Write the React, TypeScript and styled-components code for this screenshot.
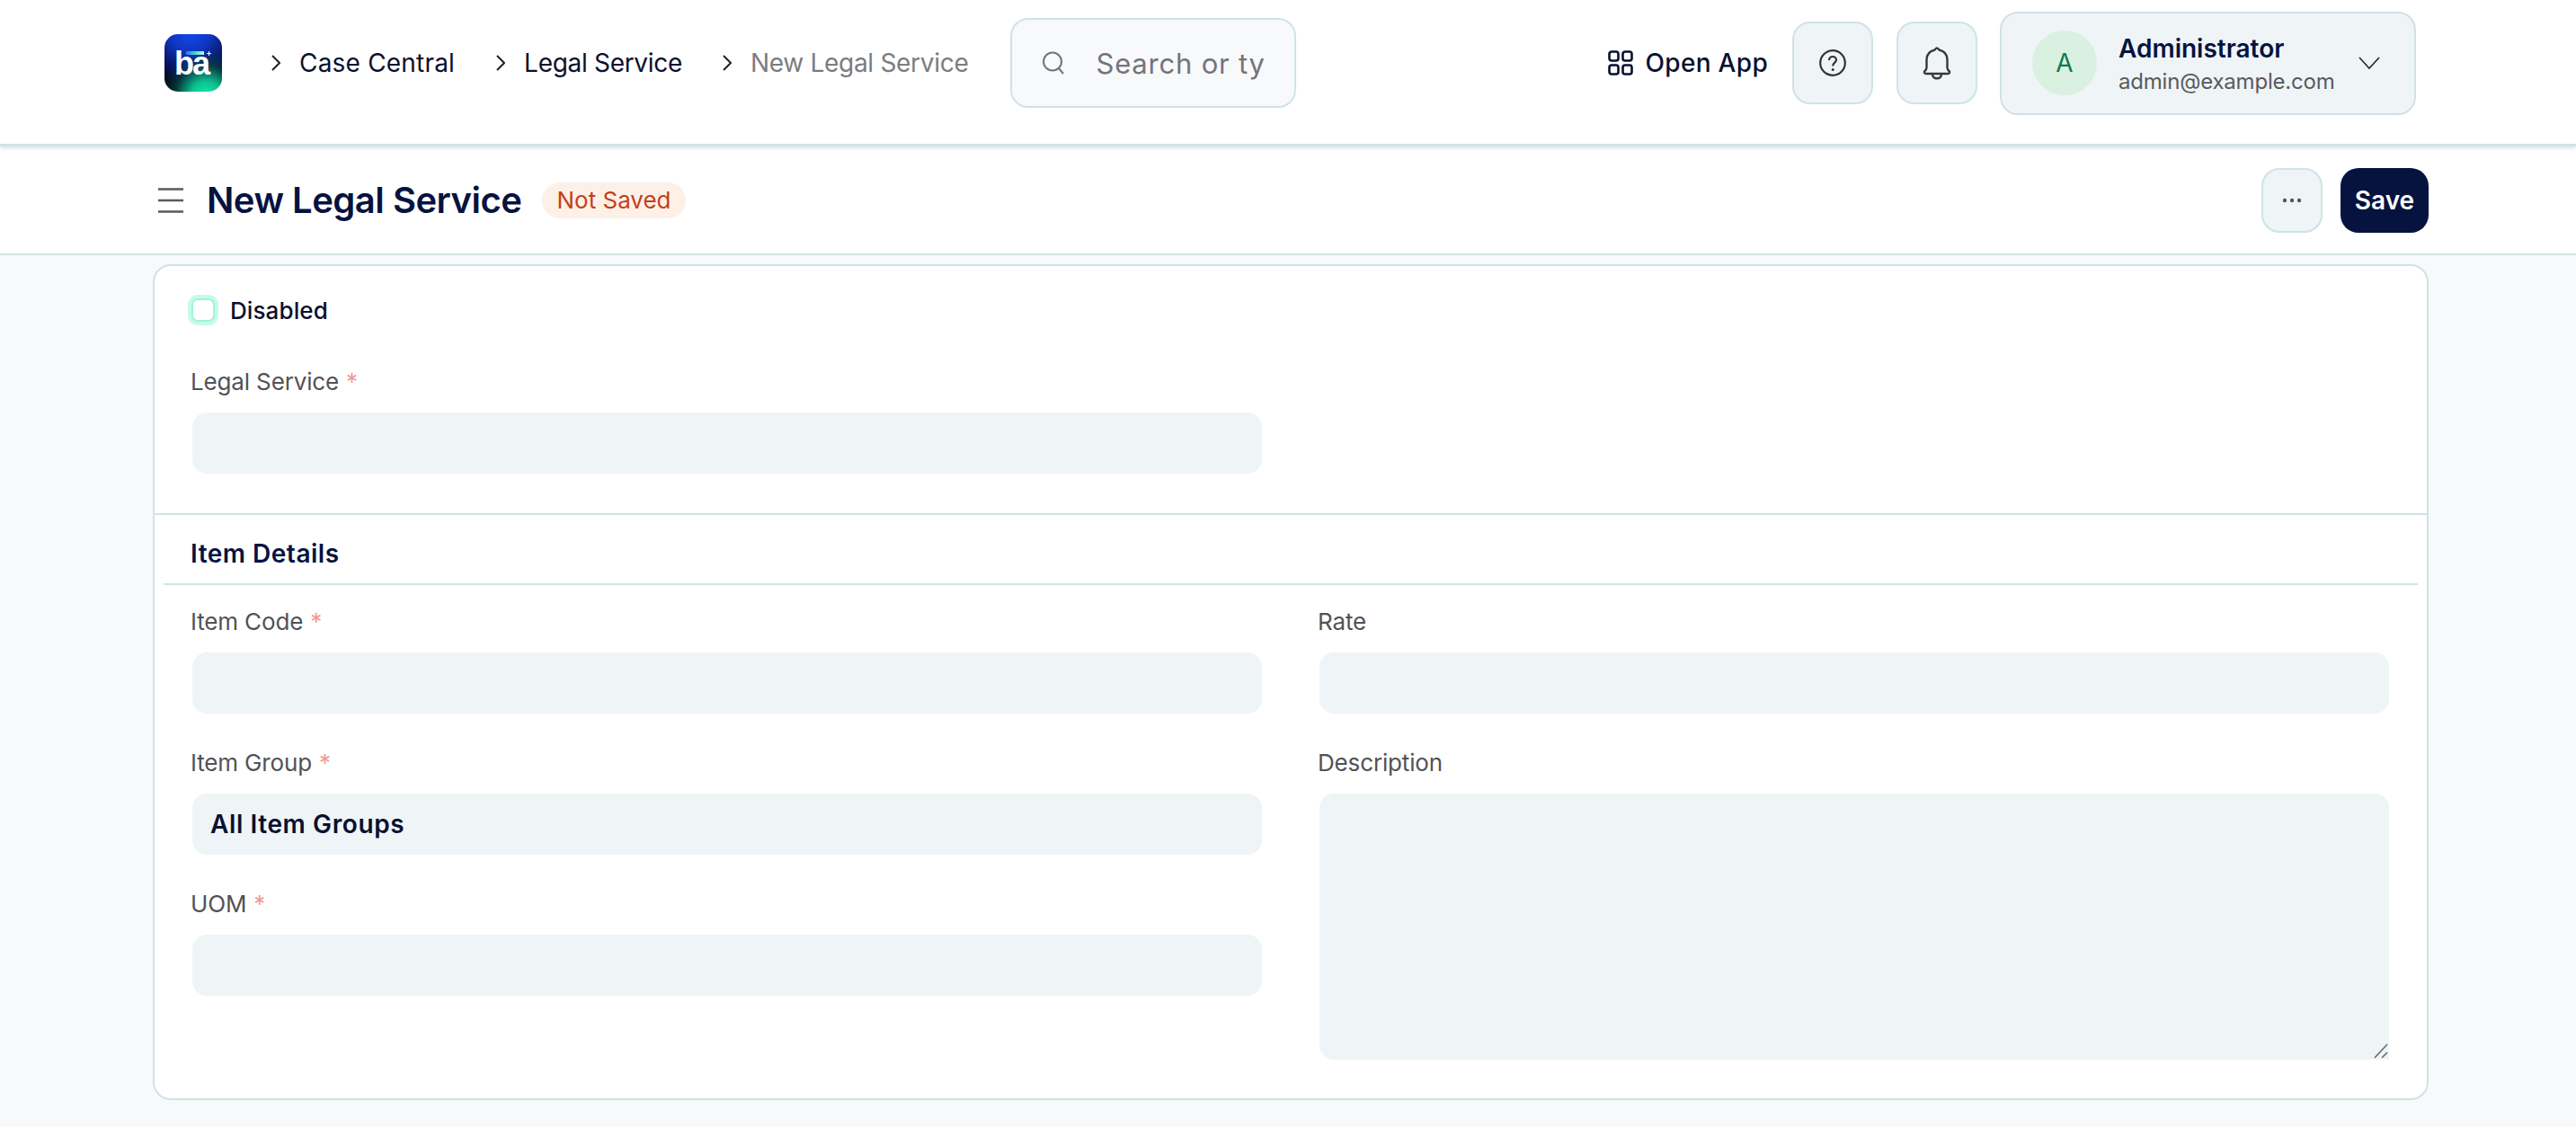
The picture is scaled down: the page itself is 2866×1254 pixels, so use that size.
import React from "react";
import styled, { createGlobalStyle } from "styled-components";

const GlobalStyle = createGlobalStyle`
  html, body {
    margin: 0;
    padding: 0;
    background: #f8f9fb;
    font-family: Inter, "Noto Sans", sans-serif;
    color: #0a1030;
  }
  * { box-sizing: border-box; }
`;

const line = "#cfe3e6";
const navy = "#06133f";
const fill = "#eff4f7";

const Page = styled.div`
  min-height: 1254px;
  background: #f8f9fb;
`;

const Navbar = styled.header`
  height: 163px;
  padding: 0 178px 20px 183px;
  display: flex;
  align-items: center;
  background: #fff;
  border-bottom: 3px solid ${line};
  box-shadow: 0 2px 4px rgba(0, 0, 0, 0.12);
  position: relative;
`;

const Logo = styled.div`
  width: 64px;
  height: 64px;
  flex: none;
  border-radius: 15px;
  position: relative;
  overflow: hidden;
  background:
    radial-gradient(circle at 72% 108%, #14f0ac 0%, #0cc090 20%, rgba(6, 80, 70, 0.6) 42%, transparent 62%),
    radial-gradient(circle at 45% -5%, #1448f0 0%, #0f36c0 30%, rgba(10, 25, 120, 0.75) 58%, transparent 80%),
    #020414;
`;

const LogoMark = styled.span`
  position: absolute;
  left: 11px;
  top: 15px;
  font-family: "Liberation Sans", sans-serif;
  font-weight: 700;
  font-size: 36px;
  line-height: 36px;
  letter-spacing: -2px;
  color: #fff;
`;

const LogoBar = styled.i`
  position: absolute;
  left: 24px;
  top: 19px;
  width: 20px;
  height: 4px;
  background: linear-gradient(90deg, #2f6cf0, #3ee8c0 55%, #cfeee8);
`;

const LogoPlus = styled.i`
  position: absolute;
  left: 47px;
  top: 19px;
  width: 5px;
  height: 5px;
  background:
    linear-gradient(#fff, #fff) center / 5px 1px no-repeat,
    linear-gradient(#fff, #fff) center / 1px 5px no-repeat;
`;

const Crumbs = styled.nav`
  display: flex;
  align-items: center;
  margin-left: 55px;
`;

const Crumb = styled.a<{ $muted?: boolean }>`
  display: flex;
  align-items: center;
  gap: 21px;
  margin-right: 45px;
  font-size: 28px;
  line-height: 36px;
  letter-spacing: -0.3px;
  color: ${(p) => (p.$muted ? "#7c7c80" : "#0a1030")};
  &:first-child {
    margin-right: 46px;
    letter-spacing: 0.2px;
  }
  &:last-child { margin-right: 0; }
`;

const SearchBox = styled.label`
  margin-left: 47px;
  width: 318px;
  height: 100px;
  flex: none;
  display: flex;
  align-items: center;
  padding-left: 33px;
  background: #f8f9fb;
  border: 2px solid ${line};
  border-radius: 20px;
`;

const SearchInput = styled.input`
  width: 188px;
  margin-left: 34px;
  padding: 0;
  border: 0;
  outline: 0;
  background: transparent;
  font-family: inherit;
  font-size: 31px;
  letter-spacing: 0.8px;
  color: #74747c;
  &::placeholder { color: #74747c; opacity: 1; }
`;

const NavRight = styled.div`
  margin-left: auto;
  display: flex;
  align-items: center;
`;

const OpenApp = styled.a`
  display: flex;
  align-items: center;
  gap: 14px;
  margin-right: 27px;
  font-size: 28px;
  font-weight: 500;
  letter-spacing: 0.3px;
  color: #0a1030;
`;

const IconButton = styled.button`
  width: 90px;
  height: 92px;
  margin-right: 26px;
  padding: 0;
  display: flex;
  align-items: center;
  justify-content: center;
  background: ${fill};
  border: 2px solid ${line};
  border-radius: 20px;
  &:last-of-type { margin-right: 25px; }
`;

const Profile = styled.div`
  width: 463px;
  height: 115px;
  padding: 0 38px 0 34px;
  display: flex;
  align-items: center;
  background: ${fill};
  border: 2px solid ${line};
  border-radius: 20px;
`;

const Avatar = styled.div`
  width: 72px;
  height: 72px;
  flex: none;
  border-radius: 50%;
  display: flex;
  align-items: center;
  justify-content: center;
  background: #daf0e1;
  color: #0e7a4c;
  font-size: 28px;
`;

const ProfileText = styled.div`
  margin-left: 24px;
  padding-top: 4px;
  display: flex;
  flex-direction: column;
  gap: 4px;
`;

const ProfileName = styled.div`
  font-size: 28px;
  line-height: 34px;
  font-weight: 600;
  color: ${navy};
`;

const ProfileMail = styled.div`
  font-size: 24px;
  line-height: 32px;
  letter-spacing: -0.2px;
  color: #5a5a5e;
`;

const ProfileCaret = styled.span`
  margin-left: auto;
  display: flex;
`;

const PageHead = styled.div`
  height: 121px;
  padding: 0 164px 0 176px;
  display: flex;
  align-items: center;
  background: #fff;
  border-bottom: 2px solid ${line};
`;

const Title = styled.h1`
  margin: 0 23px 0 26px;
  font-size: 40px;
  line-height: 48px;
  font-weight: 600;
  letter-spacing: -0.5px;
  color: ${navy};
`;

const Badge = styled.span`
  height: 40px;
  padding: 0 16px;
  display: flex;
  align-items: center;
  border-radius: 20px;
  background: #fdf1e7;
  color: #c4401a;
  font-size: 26px;
`;

const HeadActions = styled.div`
  margin-left: auto;
  display: flex;
  gap: 20px;
`;

const MoreButton = styled.button`
  width: 68px;
  height: 72px;
  padding: 0;
  display: flex;
  align-items: center;
  justify-content: center;
  background: ${fill};
  border: 2px solid ${line};
  border-radius: 20px;
`;

const SaveButton = styled.button`
  width: 98px;
  height: 72px;
  padding: 0;
  border: 0;
  border-radius: 20px;
  background: ${navy};
  color: #fff;
  font-family: inherit;
  font-size: 28px;
  font-weight: 600;
`;

const Main = styled.main`
  padding: 10px 164px 30px 170px;
`;

const Card = styled.section`
  height: 930px;
  background: #fff;
  border: 2px solid ${line};
  border-radius: 20px;
`;

const TopSection = styled.div`
  height: 277px;
  padding: 32px 40px 0;
  border-bottom: 2px solid ${line};
`;

const CheckRow = styled.label`
  height: 34px;
  display: flex;
  align-items: center;
  gap: 17px;
  margin-bottom: 45px;
  font-size: 26px;
  font-weight: 500;
  letter-spacing: 0.1px;
  color: #0a1030;
`;

const CheckBox = styled.input`
  appearance: none;
  width: 26px;
  height: 26px;
  margin: 0 0 0 1px;
  background: #fff;
  border: 2px solid #a4f2da;
  border-radius: 7px;
  box-shadow: 0 0 0 4px #c6fbe9;
`;

const SectionHead = styled.h2`
  height: 78px;
  margin: 0 10px;
  padding: 10px 0 0 30px;
  display: flex;
  align-items: center;
  border-bottom: 2px solid ${line};
  font-size: 28px;
  font-weight: 600;
  letter-spacing: 0.5px;
  color: ${navy};
`;

const Columns = styled.div`
  padding: 23px 40px 0;
  display: grid;
  grid-template-columns: 1192px 1192px;
  column-gap: 62px;
`;

const Column = styled.div`
  display: flex;
  flex-direction: column;
`;

const Field = styled.div<{ $half?: boolean }>`
  margin-bottom: 37px;
  width: ${(p) => (p.$half ? "1192px" : "auto")};
`;

const Label = styled.label`
  display: block;
  height: 36px;
  margin-bottom: 16px;
  font-size: 26px;
  line-height: 36px;
  letter-spacing: -0.15px;
  color: #525256;
`;

const Star = styled.span`
  margin-left: 8px;
  color: #f09a94;
`;

const TextInput = styled.input`
  display: block;
  width: calc(100% - 2px);
  height: 68px;
  margin-left: 2px;
  padding: 0 20px;
  border: 0;
  outline: 0;
  border-radius: 16px;
  background: ${fill};
  font-family: inherit;
  font-size: 28px;
  font-weight: 600;
  letter-spacing: 0.6px;
  color: #0a1030;
`;

const TextAreaWrap = styled.div`
  position: relative;
  width: calc(100% - 2px);
  margin-left: 2px;
`;

const TextArea = styled.textarea`
  display: block;
  width: 100%;
  height: 296px;
  padding: 16px 20px;
  border: 0;
  outline: 0;
  resize: none;
  border-radius: 16px;
  background: ${fill};
  font-family: inherit;
  font-size: 28px;
`;

const Grip = styled.svg`
  position: absolute;
  right: 0;
  bottom: 0;
  background: ${fill};
`;

const Chevron = () => (
  <svg width="10" height="18" viewBox="0 0 10 18" fill="none" stroke="#1c2230" strokeWidth="2">
    <path d="M1 1l8 8-8 8" />
  </svg>
);

const SearchIcon = () => (
  <svg width="26" height="26" viewBox="0 0 26 26" fill="none" stroke="#74747c" strokeWidth="2">
    <circle cx="12" cy="11.5" r="10" />
    <path d="M19 19l5 6" />
  </svg>
);

const GridIcon = () => (
  <svg width="28" height="28" viewBox="0 0 28 28" fill="none" stroke="#0a1030" strokeWidth="2.6">
    <rect x="1.5" y="1.5" width="10" height="10" rx="2.5" />
    <rect x="16.5" y="1.5" width="10" height="10" rx="2.5" />
    <rect x="1.5" y="16.5" width="10" height="10" rx="2.5" />
    <rect x="16.5" y="16.5" width="10" height="10" rx="2.5" />
  </svg>
);

const HelpIcon = () => (
  <svg width="30" height="30" viewBox="0 0 30 30" fill="none" stroke="#333337" strokeWidth="2.2">
    <circle cx="15" cy="15" r="13.8" />
    <path d="M11 12c0-2.400 1.800-4 4-4s4 1.600 4 3.600c0 3-3.800 3.200-3.800 6.900" />
    <circle cx="15.200" cy="22.500" r="1.500" fill="#333337" stroke="none" />
  </svg>
);

const BellIcon = () => (
  <svg width="32" height="37" viewBox="0 0 32 37" fill="none" stroke="#38383c" strokeWidth="2.400">
    <path d="M16 1.500c-1.100 0-1.800 1-2.400 2C8 4.800 4.500 9 4.500 14.500V23c0 2-1 3.200-2 4-1 .8-.8 3 1 3h25c1.800 0 2-2.200 1-3-1-.8-2-2-2-4v-8.500C27.500 9 24 4.800 18.400 3.500 17.800 2.500 17.100 1.500 16 1.500z" />
    <path d="M11 30.500c0 3 2.200 4.800 5 4.800s5-1.800 5-4.800" />
  </svg>
);

const CaretDown = () => (
  <svg width="24" height="14" viewBox="0 0 24 14" fill="none" stroke="#2a2a2e" strokeWidth="1.700">
    <path d="M1 1l11 12L23 1" />
  </svg>
);

const MenuIcon = () => (
  <svg width="28" height="28" viewBox="0 0 28 28" fill="none" stroke="#5a5a5e" strokeWidth="2.400">
    <path d="M0 1.500h28M0 14h28M0 26.500h28" />
  </svg>
);

const Dots = () => (
  <svg width="22" height="6" viewBox="0 0 22 6" fill="#55555a">
    <circle cx="3" cy="3" r="2.200" />
    <circle cx="11" cy="3" r="2.200" />
    <circle cx="19" cy="3" r="2.200" />
  </svg>
);

export default function App() {
  return (
    <Page>
      <GlobalStyle />
      <Navbar>
        <Logo>
          <LogoMark>ba</LogoMark>
          <LogoBar />
          <LogoPlus />
        </Logo>
        <Crumbs>
          <Crumb><Chevron />Case Central</Crumb>
          <Crumb><Chevron />Legal Service</Crumb>
          <Crumb $muted><Chevron />New Legal Service</Crumb>
        </Crumbs>
        <SearchBox>
          <SearchIcon />
          <SearchInput placeholder="Search or type a command" />
        </SearchBox>
        <NavRight>
          <OpenApp><GridIcon />Open App</OpenApp>
          <IconButton><HelpIcon /></IconButton>
          <IconButton><BellIcon /></IconButton>
          <Profile>
            <Avatar>A</Avatar>
            <ProfileText>
              <ProfileName>Administrator</ProfileName>
              <ProfileMail>admin@example.com</ProfileMail>
            </ProfileText>
            <ProfileCaret><CaretDown /></ProfileCaret>
          </Profile>
        </NavRight>
      </Navbar>
      <PageHead>
        <MenuIcon />
        <Title>New Legal Service</Title>
        <Badge>Not Saved</Badge>
        <HeadActions>
          <MoreButton><Dots /></MoreButton>
          <SaveButton>Save</SaveButton>
        </HeadActions>
      </PageHead>
      <Main>
        <Card>
          <TopSection>
            <CheckRow>
              <CheckBox type="checkbox" />
              Disabled
            </CheckRow>
            <Field $half>
              <Label>Legal Service<Star>*</Star></Label>
              <TextInput />
            </Field>
          </TopSection>
          <SectionHead>Item Details</SectionHead>
          <Columns>
            <Column>
              <Field>
                <Label>Item Code<Star>*</Star></Label>
                <TextInput />
              </Field>
              <Field>
                <Label>Item Group<Star>*</Star></Label>
                <TextInput defaultValue="All Item Groups" />
              </Field>
              <Field>
                <Label>UOM<Star>*</Star></Label>
                <TextInput />
              </Field>
            </Column>
            <Column>
              <Field>
                <Label>Rate</Label>
                <TextInput />
              </Field>
              <Field>
                <Label>Description</Label>
                <TextAreaWrap>
                  <TextArea />
                  <Grip width="30" height="30" viewBox="0 0 30 30" fill="none" stroke="#6a6a6e" strokeWidth="1.600">
                    <path d="M14 28L28 13M22 28l6-6" />
                  </Grip>
                </TextAreaWrap>
              </Field>
            </Column>
          </Columns>
        </Card>
      </Main>
    </Page>
  );
}
